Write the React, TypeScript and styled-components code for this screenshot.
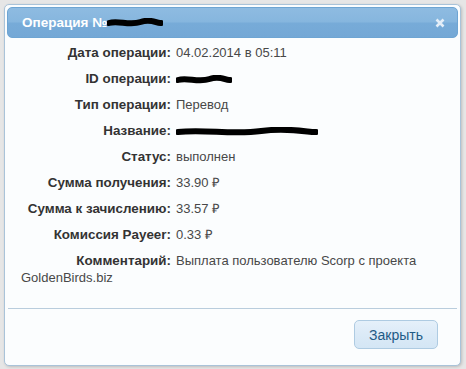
import React from 'react';
import styled, { createGlobalStyle } from 'styled-components';

const GlobalStyle = createGlobalStyle`
  html, body {
    margin: 0;
    padding: 0;
    background: #e6e6e6;
    font-family: "Liberation Sans", Arial, sans-serif;
  }
`;

const Page = styled.div`
  padding: 4px 5px 3px 4px;
`;

const Dialog = styled.div`
  height: 362px;
  box-sizing: border-box;
  display: flex;
  flex-direction: column;
  padding: 2px;
  background: #fbfdfe;
  border: 1px solid #a9c3d9;
  border-radius: 5px;
  box-shadow: 1px 1px 3px rgba(0, 0, 0, 0.18);
`;

const TitleBar = styled.div`
  height: 31px;
  box-sizing: border-box;
  display: flex;
  align-items: center;
  justify-content: space-between;
  padding: 0 12px 0 14px;
  border: 1px solid #6ea5d3;
  border-radius: 5px;
  background: linear-gradient(to bottom, #8ebbe1 0%, #86b6de 48%, #77abd8 52%, #74a8d6 100%);
  color: #fff;
  font-weight: bold;
  font-size: 13.5px;
`;

const TitleText = styled.span`
  display: flex;
  align-items: center;
`;

const Scribble = styled.svg`
  display: inline-block;
  vertical-align: middle;
`;

const CloseIcon = styled.svg`
  display: block;
`;

const Content = styled.div`
  flex: 1;
  padding: 6px 12px 0 14px;
  font-size: 13px;
  color: #484848;
`;

const Row = styled.div`
  line-height: 17px;
  margin-bottom: 9px;
`;

const Label = styled.span`
  display: inline-block;
  width: 150px;
  text-align: right;
  font-weight: bold;
  font-size: 13.4px;
  color: #333;
  margin-right: 5px;
`;

const Footer = styled.div`
  display: flex;
  justify-content: flex-end;
  margin: 0 1px;
  padding: 11px 19px 14px;
  border-top: 1px solid #b9cddd;
`;

const Button = styled.button`
  width: 84px;
  height: 29px;
  border: 1px solid #aecbe2;
  border-radius: 5px;
  background: linear-gradient(to bottom, #e5f0fa 0%, #dbeaf7 50%, #d4e6f5 100%);
  color: #1f5a86;
  font-family: "Liberation Sans", Arial, sans-serif;
  font-size: 14px;
  cursor: pointer;
`;

const Blot = ({ w }: { w: number }) => (
  <Scribble width={w} height="10" viewBox={`0 0 ${w} 10`}>
    <path
      d={`M2 5 C ${w * 0.2} 2, ${w * 0.4} 8, ${w * 0.6} 4 S ${w - 6} 6, ${w - 2} 5`}
      stroke="#000"
      strokeWidth="6"
      strokeLinecap="round"
      fill="none"
    />
  </Scribble>
);

const rows: { label: string; value: React.ReactNode }[] = [
  { label: 'Дата операции:', value: '04.02.2014 в 05:11' },
  { label: 'ID операции:', value: <Blot w={56} /> },
  { label: 'Тип операции:', value: 'Перевод' },
  { label: 'Название:', value: <Blot w={142} /> },
  { label: 'Статус:', value: 'выполнен' },
  { label: 'Сумма получения:', value: '33.90 ₽' },
  { label: 'Сумма к зачислению:', value: '33.57 ₽' },
  { label: 'Комиссия Payeer:', value: '0.33 ₽' },
  { label: 'Комментарий:', value: 'Выплата пользователю Scorp с проекта GoldenBirds.biz' },
];

export default function App() {
  return (
    <Page>
      <GlobalStyle />
      <Dialog>
        <TitleBar>
          <TitleText>
            Операция №<Blot w={56} />
          </TitleText>
          <CloseIcon width="10" height="10" viewBox="0 0 10 10">
            <path d="M1.5 1.5 L8.5 8.5 M8.5 1.5 L1.5 8.5" stroke="#e4eef8" strokeWidth="2.6" />
          </CloseIcon>
        </TitleBar>
        <Content>
          {rows.map(r => (
            <Row key={r.label}>
              <Label>{r.label}</Label>
              {r.value}
            </Row>
          ))}
        </Content>
        <Footer>
          <Button>Закрыть</Button>
        </Footer>
      </Dialog>
    </Page>
  );
}
